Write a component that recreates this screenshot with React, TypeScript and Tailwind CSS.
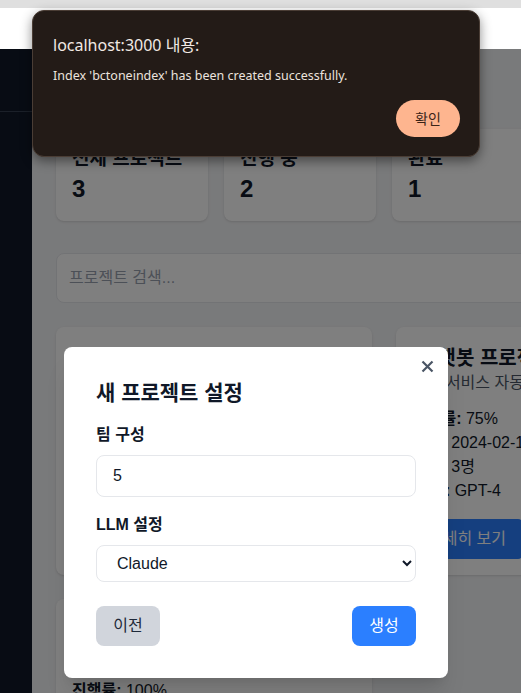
import React from "react";

type Project = {
  id: number;
  title: string;
  description: string;
  progress: number;
  startDate: string;
  team: number;
  llm: string;
};

const stats = [
  { label: "전체 프로젝트", value: 3 },
  { label: "진행 중", value: 2 },
  { label: "완료", value: 1 },
  { label: "평균 진행률", value: "72%" },
];

const projects: Project[] = [
  {
    id: 1,
    title: "웹사이트 리뉴얼",
    description: "회사 웹사이트 전면 개편",
    progress: 40,
    startDate: "2024-01-15",
    team: 5,
    llm: "Claude",
  },
  {
    id: 2,
    title: "AI 챗봇 프로젝트",
    description: "고객 서비스 자동화 챗봇 개발",
    progress: 75,
    startDate: "2024-02-10",
    team: 3,
    llm: "GPT-4",
  },
  {
    id: 3,
    title: "데이터 분석 플랫폼",
    description: "사내 데이터 시각화 도구",
    progress: 100,
    startDate: "2023-11-01",
    team: 4,
    llm: "Gemini",
  },
];

function ProjectCard({ project }: { project: Project }) {
  return (
    <div className="bg-white rounded-lg shadow p-4">
      <h3 className="text-xl font-bold text-gray-900 pt-[3px] leading-[25px]">{project.title}</h3>
      <p className="text-gray-600 mb-3">{project.description}</p>
      <div className="text-gray-900">
        <p>
          <span className="font-semibold">진행률:</span> {project.progress}%
        </p>
        <p>
          <span className="font-semibold">시작:</span> {project.startDate}
        </p>
        <p>
          <span className="font-semibold">팀원:</span> {project.team}명
        </p>
        <p>
          <span className="font-semibold">LLM:</span> {project.llm}
        </p>
      </div>
      <button className="mt-4 px-4 py-2 bg-blue-500 text-white rounded">상세히 보기</button>
    </div>
  );
}

export default function App() {
  return (
    <div className="relative h-[693px] w-[521px] overflow-hidden bg-white font-['Liberation_Sans','Noto_Sans_CJK_KR',sans-serif]">
      {/* browser chrome */}
      <div className="h-2 bg-[#dfdfdf]" />
      <div className="h-[41px] bg-white" />

      <div className="relative flex h-[644px]">
        <aside className="w-8 shrink-0 bg-gray-900">
          <div className="h-[63px] border-b border-gray-700" />
        </aside>

        <main className="w-[704px] shrink-0 bg-gray-100 p-6">
          <h1 className="text-2xl font-bold mb-6 text-gray-900">프로젝트 대시보드</h1>

          <div className="grid grid-cols-4 gap-4 mb-8">
            {stats.map((s) => (
              <div key={s.label} className="bg-white rounded-lg shadow p-4">
                <h3 className="text-[19px] leading-7 font-bold text-gray-900">{s.label}</h3>
                <p className="text-2xl font-bold text-gray-900">{s.value}</p>
              </div>
            ))}
          </div>

          <input
            type="text"
            placeholder="프로젝트 검색..."
            className="w-full p-3 mb-6 bg-white border border-gray-200 rounded-lg placeholder:text-gray-400"
          />

          <div className="grid grid-cols-2 gap-6">
            {projects.map((p) => (
              <ProjectCard key={p.id} project={p} />
            ))}
          </div>
        </main>

        {/* modal overlay */}
        <div className="absolute inset-0 bg-black/50">
          <div className="absolute left-16 top-[298px] w-96 bg-white rounded-lg p-8 shadow-xl">
            <button className="absolute top-[13px] right-[14px] text-gray-600">
              <svg width="13" height="13" viewBox="0 0 13 13" fill="none" stroke="currentColor" strokeWidth="2.2">
                <path d="M1.5 1.5 11.5 11.5M11.5 1.5 1.5 11.5" />
              </svg>
            </button>
            <h2 className="text-[21px] leading-7 font-bold mb-4 text-gray-900">새 프로젝트 설정</h2>

            <label className="block font-semibold mb-2 text-gray-900">팀 구성</label>
            <input
              type="text"
              readOnly
              value="5"
              className="w-full px-4 py-2 mb-4 border border-gray-200 rounded-lg text-gray-900"
            />

            <label className="block font-semibold mb-2 text-gray-900">LLM 설정</label>
            <select className="w-full px-4 py-2 border border-gray-200 rounded-lg bg-white text-gray-900" defaultValue="Claude">
              <option>GPT-4</option>
              <option>Claude</option>
              <option>Gemini</option>
            </select>

            <div className="flex justify-between mt-6">
              <button className="w-16 py-2 bg-gray-300 text-gray-800 rounded-lg">이전</button>
              <button className="w-16 py-2 bg-blue-500 text-white rounded-lg">생성</button>
            </div>
          </div>
        </div>
      </div>

      {/* browser alert */}
      <div className="absolute left-8 top-[10px] w-[448px] h-[147px] rounded-xl border border-[#4a3d35] bg-[#231b17] shadow-[0_4px_12px_rgba(0,0,0,0.45)] px-5 pt-[22px] font-['Noto_Sans','Noto_Sans_CJK_KR',sans-serif]">
        <p className="text-[16px] leading-6 text-[#f1e9e4]">localhost:3000 내용:</p>
        <p className="mt-[9px] text-[12.5px] leading-5 text-[#ece3de]">
          Index 'bctoneindex' has been created successfully.
        </p>
        <div className="flex justify-end mt-[14px] -mr-[1px]">
          <button className="h-[37px] w-16 rounded-full bg-[#feb58f] text-[14px] text-[#3a2418]">확인</button>
        </div>
      </div>
    </div>
  );
}
